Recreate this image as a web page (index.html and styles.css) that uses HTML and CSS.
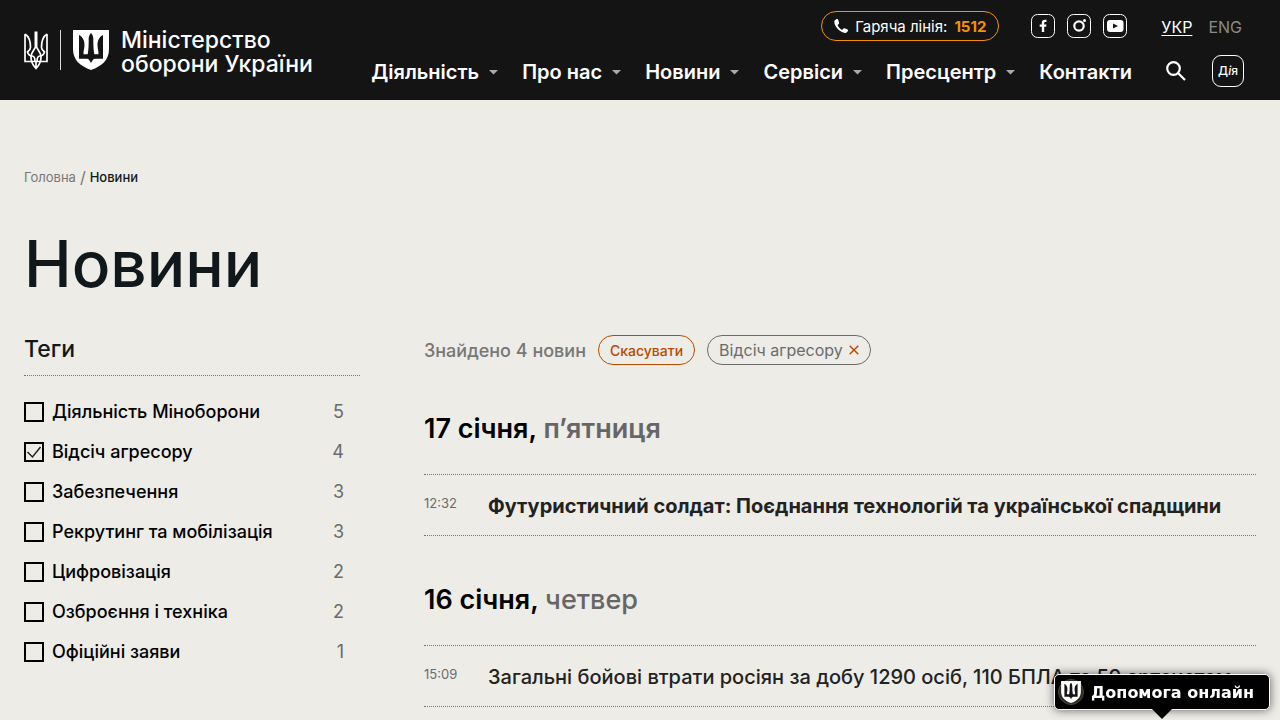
FILE: index.html
```html
<!DOCTYPE html>
<html lang="uk">
<head>
<meta charset="utf-8">
<meta name="viewport" content="width=device-width, initial-scale=1">
<title>Новини</title>
<link rel="stylesheet" href="styles.css">
</head>
<body>
<svg class="sprite" aria-hidden="true">
  <symbol id="arrow" viewBox="0 0 9 5"><path d="M0 0h9L4.500 4.500z" fill="#aaa"/></symbol>
  <symbol id="shield" viewBox="0 0 36 40">
    <path d="M0 0h36v19c0 11-7 17-18 21C7 36 0 30 0 19z" fill="#fff"/>
    <path d="M18 3c1.800 2 2.600 4.500 2.300 7 0 5 .2 10 1 14.200h4.200c.2-3.500-1-5.500-1-9.200 0-4 1.500-8 5.500-10v23.800h-8c-1.500 0-2.500 1.500-4 4.200-1.500-2.700-2.500-4.200-4-4.200H6V5c4 2 5.500 6 5.500 10 0 3.700-1.200 5.700-1 9.200h4.200c.8-4.200 1-9.200 1-14.200-.3-2.500.5-5 2.300-7z" fill="#141414"/>
  </symbol>
</svg>

<header class="header">
  <a class="brand" href="#">
    <svg class="trident" viewBox="0 0 24 40" fill="none" stroke="#fff" stroke-width="1.700">
      <path d="M1 4v27.500h22V4M1 4c4 2.500 5.500 7 5.500 13.500 0 2-1.200 3-3 4.500.8 2.500 2 4 4.500 4 2 0 3 1.500 3 5.500M23 4c-4 2.500-5.500 7-5.500 13.500 0 2 1.200 3 3 4.500-.8 2.500-2 4-4.500 4-2 0-3 1.500-3 5.500"/>
      <path d="M12 1.500v15" stroke-width="3"/>
      <path d="M12 15c-.5 5-5 6-5 12 0 5 2 8.500 5 11.500 3-3 5-6.500 5-11.500 0-6-4.500-7-5-12zM12 31v7"/>
    </svg>
    <span class="brand-line"></span>
    <svg class="brand-shield"><use href="#shield"/></svg>
    <span class="brand-name">Міністерство<br>оборони України</span>
  </a>
  <div class="header-rows">
    <div class="top-row">
      <a class="hotline" href="tel:1512">
        <svg class="phone" viewBox="0 0 14 14"><path d="M2.500 0 .4 1.700C-.5 6 5 13 11.300 14c1.200 0 2.300-1 2.700-2.200.1-.8-.2-1.200-.8-1.500l-2.700-1c-.7-.2-1.200 0-1.600.6l-.9 1C6 10 4.200 8 3.600 6l1-.9c.5-.4.6-.9.4-1.500L4.200.8C3.900.1 3.200-.3 2.500 0z" fill="#fff"/></svg>
        Гаряча лінія: <strong>1512</strong>
      </a>
      <div class="social">
        <a href="#" aria-label="Facebook"><svg viewBox="0 0 24 24"><rect x=".5" y=".5" width="23" height="23" rx="6" fill="none" stroke="#fff"/><path d="M10.800 18v-5.200H8.700v-2.300h2.100V8.900c0-2 1.200-3.100 3-3.100h1.700V8h-1.200c-.8 0-1.100.4-1.100 1.100v1.400h2.300l-.4 2.300h-1.900V18z" fill="#fff"/></svg></a>
        <a href="#" aria-label="Instagram"><svg viewBox="0 0 24 24"><rect x=".5" y=".5" width="23" height="23" rx="6" fill="none" stroke="#fff"/><circle cx="12" cy="12" r="4.700" fill="none" stroke="#fff" stroke-width="2.200"/><circle cx="17.500" cy="6.500" r="1.500" fill="#fff"/></svg></a>
        <a href="#" aria-label="YouTube"><svg viewBox="0 0 24 24"><rect x=".5" y=".5" width="23" height="23" rx="6" fill="none" stroke="#fff"/><rect x="4" y="6" width="16.500" height="12" rx="3" fill="#fff"/><path d="m10 9.500 5 2.500-5 2.500z" fill="#141414"/></svg></a>
      </div>
      <div class="langs"><a class="lang current" href="#">УКР</a><a class="lang" href="#">ENG</a></div>
    </div>
    <div class="nav-row">
      <nav class="nav">
        <a href="#">Діяльність<svg class="arrow"><use href="#arrow"/></svg></a>
        <a href="#">Про нас<svg class="arrow"><use href="#arrow"/></svg></a>
        <a href="#">Новини<svg class="arrow"><use href="#arrow"/></svg></a>
        <a href="#">Сервіси<svg class="arrow"><use href="#arrow"/></svg></a>
        <a href="#">Пресцентр<svg class="arrow"><use href="#arrow"/></svg></a>
        <a href="#">Контакти</a>
      </nav>
      <button class="search" type="button" aria-label="Пошук"><svg viewBox="0 0 20 20" fill="none" stroke="#fff" stroke-width="2.200"><circle cx="7.500" cy="7.500" r="6.300"/><path d="m12 12 7 7"/></svg></button>
      <a class="diia" href="#">Д<i>і</i>я</a>
    </div>
  </div>
</header>

<main class="page">
  <nav class="crumbs"><a href="#">Головна</a><span class="slash">/</span><span class="here">Новини</span></nav>
  <h1 class="title">Новини</h1>
  <div class="columns">
    <aside class="tags">
      <h2 class="tags-title">Теги</h2>
      <ul class="tag-list">
        <li><label><input type="checkbox"><span>Діяльність Міноборони</span></label><span class="count">5</span></li>
        <li><label><input type="checkbox" checked><span>Відсіч агресору</span></label><span class="count">4</span></li>
        <li><label><input type="checkbox"><span>Забезпечення</span></label><span class="count">3</span></li>
        <li><label><input type="checkbox"><span>Рекрутинг та мобілізація</span></label><span class="count">3</span></li>
        <li><label><input type="checkbox"><span>Цифровізація</span></label><span class="count">2</span></li>
        <li><label><input type="checkbox"><span>Озброєння і техніка</span></label><span class="count">2</span></li>
        <li><label><input type="checkbox"><span>Офіційні заяви</span></label><span class="count">1</span></li>
      </ul>
    </aside>
    <section class="news">
      <div class="filters">
        <span class="found">Знайдено 4 новин</span>
        <button class="pill reset" type="button">Скасувати</button>
        <button class="pill" type="button">Відсіч агресору<svg class="cross" viewBox="0 0 10 10"><path d="m.7.7 8.600 8.600M9.300.7.7 9.300" stroke="#b84a00" stroke-width="1.400"/></svg></button>
      </div>
      <section class="day">
        <h2 class="date">17 січня, <span>п’ятниця</span></h2>
        <article class="item"><time>12:32</time><a class="strong" href="#">Футуристичний солдат: Поєднання технологій та української спадщини</a></article>
      </section>
      <section class="day">
        <h2 class="date">16 січня, <span class="light">четвер</span></h2>
        <article class="item"><time>15:09</time><a href="#">Загальні бойові втрати росіян за добу 1290 осіб, 110 БПЛА та 59 артсистем</a></article>
      </section>
    </section>
  </div>
</main>

<button class="help" type="button">
  <svg class="help-icon" viewBox="0 0 26 26"><circle cx="13" cy="13" r="12.500" fill="#2c2a20" stroke="#4b4839"/><use href="#shield" x="3" y="2" width="20" height="22"/></svg>
  Допомога онлайн
</button>
</body>
</html>
```

FILE: styles.css
```css
* { box-sizing: border-box; }
body {
  margin: 0;
  background: #edece6;
  color: #000;
  font-family: Inter, "Noto Sans", sans-serif;
}
a { color: inherit; text-decoration: none; }
button { font-family: inherit; cursor: pointer; }
svg { display: block; flex: none; }
h1, h2, ul { margin: 0; padding: 0; }
.sprite { position: absolute; width: 0; height: 0; }

.header {
  display: flex;
  justify-content: space-between;
  padding: 11px 36px 13px 24px;
  background: #141414;
  color: #fff;
}
.brand { display: flex; align-items: center; padding-top: 2px; }
.trident { width: 24px; height: 40px; }
.brand-line { width: 1px; height: 40px; margin: 0 12px; background: #d8d8d8; }
.brand-shield { width: 36px; height: 40px; }
.brand-name { margin-left: 12px; padding-top: 3px; font-size: 23px; line-height: 24px; font-weight: 500; white-space: nowrap; }
.header-rows { display: flex; flex-direction: column; align-items: flex-end; gap: 14px; }
.top-row { display: flex; align-items: center; height: 30px; padding-right: 2px; }
.hotline {
  display: flex;
  align-items: center;
  gap: 7px;
  height: 30px;
  padding: 0 12px;
  border: 1px solid #f39200;
  border-radius: 15px;
  font-size: 15px;
  white-space: nowrap;
}
.hotline strong { color: #f39200; font-size: 15px; }
.phone { width: 14px; height: 14px; }
.social { display: flex; gap: 12px; margin: 0 34px 0 32px; }
.social svg { width: 24px; height: 24px; }
.langs { display: flex; gap: 16px; padding-top: 2px; font-size: 16px; }
.lang { color: #8b8b86; }
.lang.current { color: #fff; text-decoration: underline; text-underline-offset: 2px; }
.nav-row { display: flex; align-items: center; height: 32px; }
.nav { display: flex; gap: 24px; padding-top: 2px; font-size: 20px; font-weight: 600; white-space: nowrap; }
.nav a { display: flex; align-items: center; gap: 10px; }
.arrow { width: 9px; height: 5px; }
.search { margin: 0 26px 0 34px; padding: 0; border: 0; background: none; }
.search svg { width: 20px; height: 20px; }
.diia {
  width: 32px;
  height: 32px;
  border: 1px solid #fff;
  border-radius: 9px;
  font-size: 12px;
  font-weight: 500;
  line-height: 30px;
  text-align: center;
}

.page { padding: 68px 24px 12px; }
.crumbs { display: flex; align-items: center; gap: 4px; height: 18px; font-size: 13px; color: #777; }
.slash { font-size: 16px; }
.here { color: #11181c; font-weight: 500; }
.title { margin-top: 38px; color: #11181c; font-size: 64px; line-height: 80px; font-weight: 500; }
.columns { display: grid; grid-template-columns: 336px 1fr; gap: 64px; margin-top: 31px; }
.tags-title { padding-bottom: 12px; border-bottom: 1px dotted #777; color: #11181c; font-size: 23px; line-height: 28px; font-weight: 500; }
.tag-list { padding: 16px 16px 0 0; list-style: none; font-size: 18px; line-height: 40px; }
.tag-list li { display: flex; justify-content: space-between; }
.tag-list label { display: flex; align-items: center; gap: 8px; font-weight: 500; }
.tag-list input {
  appearance: none;
  width: 20px;
  height: 20px;
  margin: 0;
  border: 2px solid #000;
}
.tag-list input:checked {
  background: url("data:image/svg+xml,%3Csvg xmlns='http://www.w3.org/2000/svg' viewBox='0 0 16 16'%3E%3Cpath d='m1.500 8 5 5 8-10' fill='none' stroke='%23222' stroke-width='1.500'/%3E%3C/svg%3E") center / 16px no-repeat;
}
.count { color: #6b6b6b; }
.filters { display: flex; align-items: center; gap: 12px; white-space: nowrap; }
.found { color: #777; font-size: 18px; font-weight: 500; }
.pill {
  display: flex;
  align-items: center;
  gap: 6px;
  height: 30px;
  padding: 0 11px;
  border: 1px solid #6b6b6b;
  border-radius: 15px;
  background: none;
  color: #6b6b6b;
  font-size: 16px;
}
.reset { border-color: #b84a00; color: #b84a00; font-size: 14px; font-weight: 500; }
.cross { width: 10px; height: 10px; }
.day { margin-top: 48px; }
.date { padding-bottom: 29px; font-size: 27px; line-height: 32px; font-weight: 600; border-bottom: 1px dotted #777; }
.date span { color: #666; }
.date .light { font-weight: 500; }
.item {
  display: grid;
  grid-template-columns: 64px 1fr;
  padding: 17px 0 15px;
  border-bottom: 1px dotted #777;
  color: #222;
  font-size: 20px;
  line-height: 28px;
}
.item time { color: #6b6b6b; font-size: 13px; line-height: 22px; }
.item a { font-weight: 500; white-space: nowrap; }
.item .strong { font-weight: 700; }

.help {
  position: fixed;
  right: 10px;
  bottom: 10px;
  display: flex;
  align-items: center;
  gap: 7px;
  height: 36px;
  padding: 0 15px 0 3px;
  border: 1px solid #fff;
  border-radius: 5px;
  background: #000;
  box-shadow: 0 0 10px rgba(0, 0, 0, .6);
  color: #fff;
  font: bold 16px "DejaVu Sans", sans-serif;
  white-space: nowrap;
}
.help::after {
  content: "";
  position: absolute;
  top: 34px;
  left: 50%;
  margin-left: -10px;
  border: 10px solid transparent;
  border-top-color: #000;
  border-bottom: 0;
}
.help-icon { width: 26px; height: 26px; }
```
